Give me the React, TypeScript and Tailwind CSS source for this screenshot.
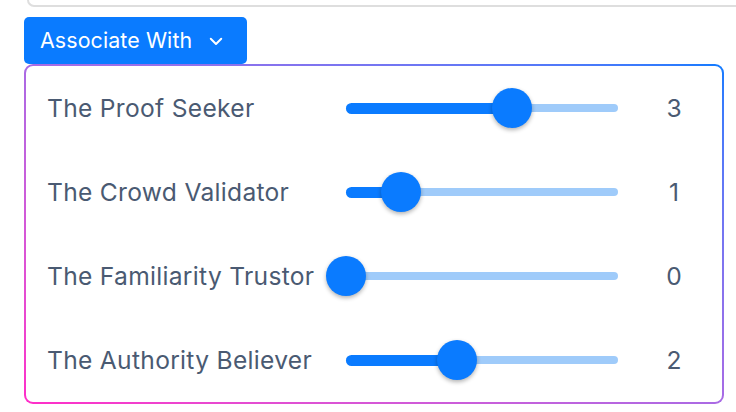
import React from "react";

const rows = [
  { label: "The Proof Seeker", value: 3 },
  { label: "The Crowd Validator", value: 1 },
  { label: "The Familiarity Trustor", value: 0 },
  { label: "The Authority Believer", value: 2 },
];

const MAX = 5;
const STEP = 55.3;

function Slider({ value }: { value: number }) {
  const px = value * STEP;
  return (
    <div className="relative w-[272px] h-[40px] flex items-center">
      <div className="absolute left-0 right-0 h-[8px] rounded-full bg-[#9fcbfa]" />
      <div
        className="absolute left-0 h-[11px] rounded-full bg-[#0a7bff]"
        style={{ width: `${Math.min(px, 272)}px` }}
      />
      <div
        className="absolute w-[40px] h-[40px] rounded-full bg-[#0a7bff] -translate-x-1/2 shadow-[0_2px_4px_rgba(0,0,0,0.3)]"
        style={{ left: `${px}px` }}
        aria-valuemax={MAX}
      />
    </div>
  );
}

export default function App() {
  return (
    <div
      className="w-[736px] h-[412px] bg-white overflow-hidden"
      style={{ fontFamily: "Inter, 'Noto Sans', sans-serif" }}
    >
      <div className="ml-[27px] h-[7px] border-l-2 border-b-2 border-[#dedede] rounded-bl-[10px]" />
      <div className="ml-[24px] mt-[10px] w-[223px] h-[47px] bg-[#0a7bff] rounded-[5px] flex items-center pl-[16px] text-white text-[21.4px] tracking-[0.005em]">
        <span className="leading-none">Associate With</span>
        <svg
          className="ml-[15px] mt-[1px]"
          width="18"
          height="18"
          viewBox="0 0 24 24"
          fill="none"
          stroke="currentColor"
          strokeWidth="2.6"
          strokeLinecap="round"
          strokeLinejoin="round"
        >
          <path d="M5 9l7 7 7-7" />
        </svg>
      </div>
      <div className="ml-[24px] w-[700px] h-[340px] p-[2px] rounded-[9px] bg-gradient-to-tr from-[#ff2cc8] to-[#0a7bff]">
        <div className="w-full h-full bg-white rounded-[7px] flex flex-col">
          {rows.map((r) => (
            <div key={r.label} className="h-[84px] flex items-center">
              <div className="w-[320px] pl-[21px] text-[24.6px] tracking-[0.012em] text-[#4a5a72]">
                {r.label}
              </div>
              <Slider value={r.value} />
              <div className="flex-1 text-center pl-[8px] text-[24.6px] text-[#4a5a72]">
                {r.value}
              </div>
            </div>
          ))}
        </div>
      </div>
    </div>
  );
}
